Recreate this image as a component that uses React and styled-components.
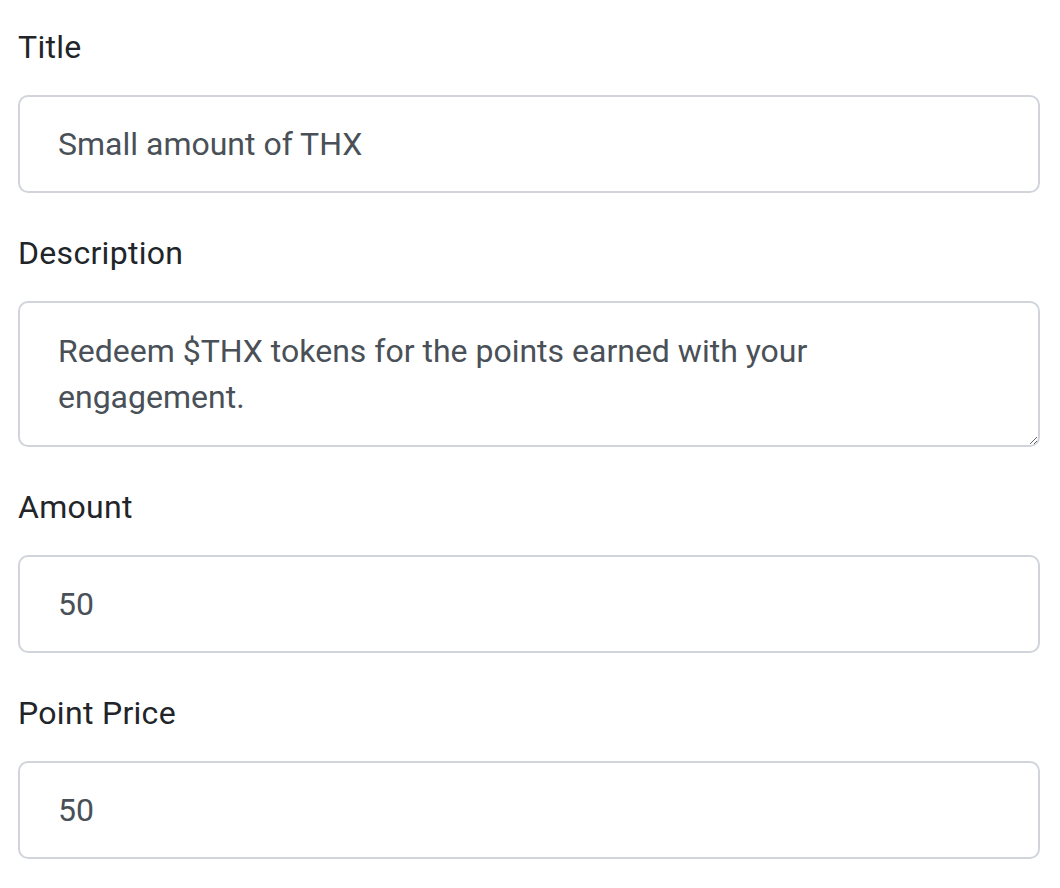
import styled, { createGlobalStyle } from "styled-components";

const GlobalStyle = createGlobalStyle`
    body {
        margin: 0;
        background: #ffffff;
        font-family: Roboto, "Noto Sans", sans-serif;
    }
`;

const fields = [
    { id: "title", label: "Title", value: "Small amount of THX" },
    {
        id: "description",
        label: "Description",
        value: "Redeem $THX tokens for the points earned with your engagement.",
        multiline: true
    },
    { id: "amount", label: "Amount", value: "50" },
    { id: "price", label: "Point Price", value: "50" }
];

export default function App() {
    return (
        <>
            <GlobalStyle />
            <Form onSubmit={(e) => e.preventDefault()}>
                {fields.map((f) => (
                    <Group key={f.id}>
                        <Label htmlFor={f.id}>{f.label}</Label>
                        {f.multiline ? (
                            <TextArea id={f.id} rows={2} defaultValue={f.value} />
                        ) : (
                            <Input id={f.id} type="text" defaultValue={f.value} />
                        )}
                    </Group>
                ))}
            </Form>
        </>
    );
}

const Form = styled.form`
    display: flex;
    flex-direction: column;
    gap: 39px;
    width: 1022px;
    padding: 26px 20px 0 18px;
`;

const Group = styled.div`
    display: flex;
    flex-direction: column;
`;

const Label = styled.label`
    font-size: 32px;
    line-height: 42px;
    letter-spacing: 0.3px;
    color: #212529;
    margin-bottom: 27px;
`;

const controlStyles = `
    box-sizing: border-box;
    width: 100%;
    font-family: Roboto, "Noto Sans", sans-serif;
    font-size: 32px;
    line-height: 46px;
    color: #495057;
    background: #ffffff;
    border: 2px solid #d1d5db;
    border-radius: 10px;
    padding: 25px 38px;
    outline: none;
    margin: 0;
`;

const Input = styled.input`
    ${controlStyles}
    height: 98px;
`;

const TextArea = styled.textarea`
    ${controlStyles}
    height: 146px;
    resize: vertical;
    display: block;
`;
